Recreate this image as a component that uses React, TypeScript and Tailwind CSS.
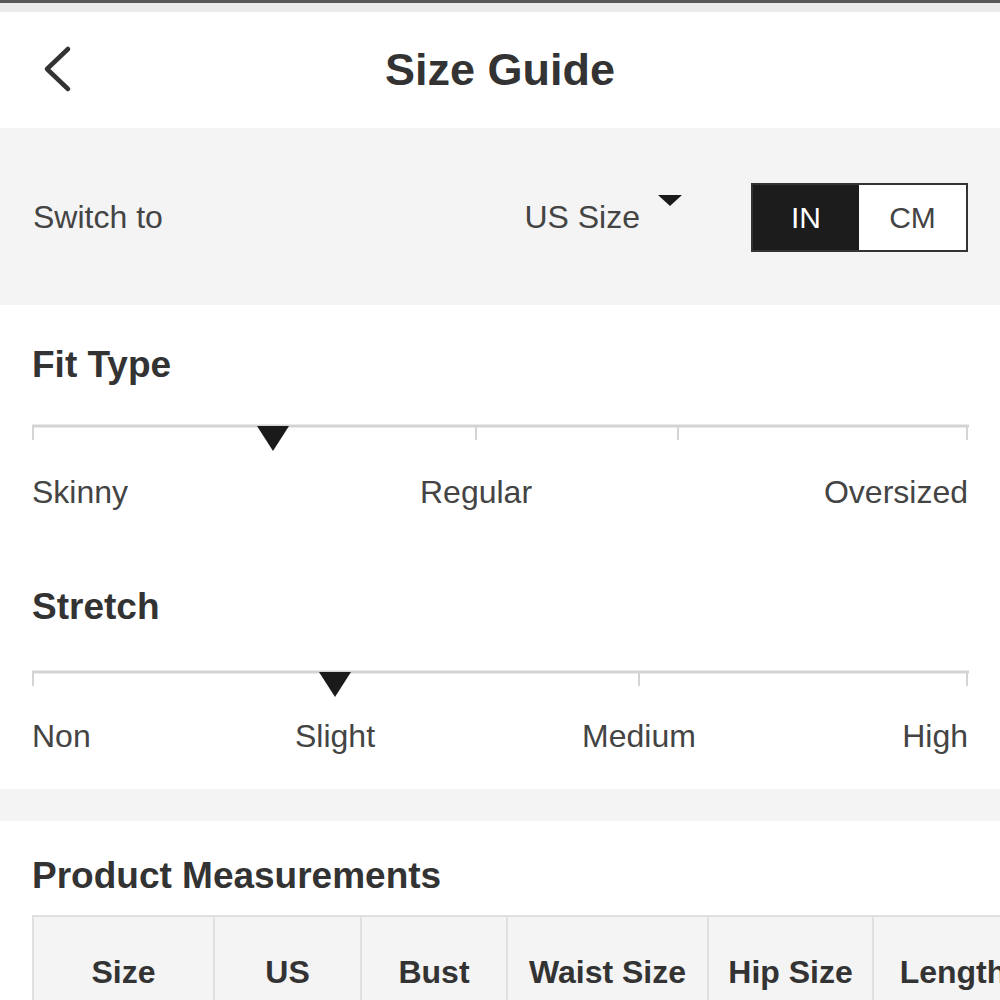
import React from "react";

const font = { fontFamily: '"Liberation Sans", Arial, sans-serif' };

function Track({ ticks, marker }: { ticks: number[]; marker: number }) {
  return (
    <svg width="937" height="30" viewBox="0 0 937 30" className="block">
      <line x1="0" y1="2" x2="937" y2="2" stroke="#d4d4d4" strokeWidth="3" />
      {ticks.map((t) => (
        <line key={t} x1={t} y1="2" x2={t} y2="16" stroke="#d4d4d4" strokeWidth="2" />
      ))}
      <polygon points={`${marker - 16},2 ${marker + 16},2 ${marker},27`} fill="#1a1a1a" />
    </svg>
  );
}

export default function App() {
  return (
    <div className="w-[1000px] h-[1000px] overflow-hidden bg-white text-[#333]" style={font}>
      <div className="h-[3px] bg-[#5a5a5a]" />
      <div className="h-[9px] bg-[#ececec]" />
      {/* Header */}
      <div className="h-[116px] flex items-center relative">
        <svg width="40" height="50" viewBox="0 0 40 50" className="absolute left-[38px] top-[33px]">
          <polyline points="30,4 9,24 30,44" fill="none" stroke="#333" strokeWidth="4.5" strokeLinecap="round" strokeLinejoin="round" />
        </svg>
        <div className="w-full text-center text-[45px] font-bold text-[#333]">Size Guide</div>
      </div>
      {/* Switch */}
      <div className="h-[177px] bg-[#f4f4f4] flex items-center pl-[33px] pr-[32px]">
        <div className="text-[32px] text-[#444] flex-1">Switch to</div>
        <div className="flex items-start mr-[69px]">
          <span className="text-[32px] text-[#444]">US Size</span>
          <svg width="24" height="12" viewBox="0 0 24 12" className="ml-[18px] mt-[2px]">
            <polygon points="0,0 24,0 12,11" fill="#1a1a1a" />
          </svg>
        </div>
        <div className="flex h-[69px] w-[217px] border-2 border-[#333] mt-[2px]">
          <div className="w-[106px] bg-[#1c1c1c] text-white text-[30px] flex items-center justify-center">IN</div>
          <div className="flex-1 bg-white text-[#444] text-[30px] flex items-center justify-center">CM</div>
        </div>
      </div>
      {/* Fit type */}
      <div className="px-[32px]">
        <div className="text-[37px] font-bold text-[#333] pt-[38px] leading-[44px]">Fit Type</div>
        <div className="mt-[37px]">
          <Track ticks={[1, 444, 646, 935]} marker={241} />
        </div>
        <div className="relative h-[40px] mt-[18px] text-[32px] text-[#444] leading-[40px]">
          <span className="absolute left-0">Skinny</span>
          <span className="absolute left-[444px] -translate-x-1/2">Regular</span>
          <span className="absolute right-[0px]">Oversized</span>
        </div>
        <div className="text-[37px] font-bold text-[#333] mt-[73px] leading-[44px]">Stretch</div>
        <div className="mt-[41px]">
          <Track ticks={[1, 607, 935]} marker={303} />
        </div>
        <div className="relative h-[40px] mt-[16px] text-[32px] text-[#444] leading-[40px]">
          <span className="absolute left-0">Non</span>
          <span className="absolute left-[303px] -translate-x-1/2">Slight</span>
          <span className="absolute left-[607px] -translate-x-1/2">Medium</span>
          <span className="absolute right-[0px]">High</span>
        </div>
      </div>
      <div className="h-[32px] bg-[#f4f4f4] mt-[33px]" />
      {/* Product measurements */}
      <div className="pl-[32px]">
        <div className="text-[37px] font-bold text-[#333] mt-[33px] leading-[44px]">Product Measurements</div>
        <div className="mt-[17px] flex border-t-2 border-l-2 border-[#e0e0e0] bg-[#f4f4f4] h-[110px] w-[1100px]">
          {[
            ["Size", 181],
            ["US", 147],
            ["Bust", 146],
            ["Waist Size", 201],
            ["Hip Size", 165],
            ["Length", 160],
          ].map(([label, w]) => (
            <div
              key={label as string}
              className="border-r-2 border-[#e0e0e0] flex items-center justify-center pt-[2px] text-[32px] font-bold text-[#333] shrink-0"
              style={{ width: w as number }}
            >
              {label}
            </div>
          ))}
        </div>
      </div>
    </div>
  );
}
